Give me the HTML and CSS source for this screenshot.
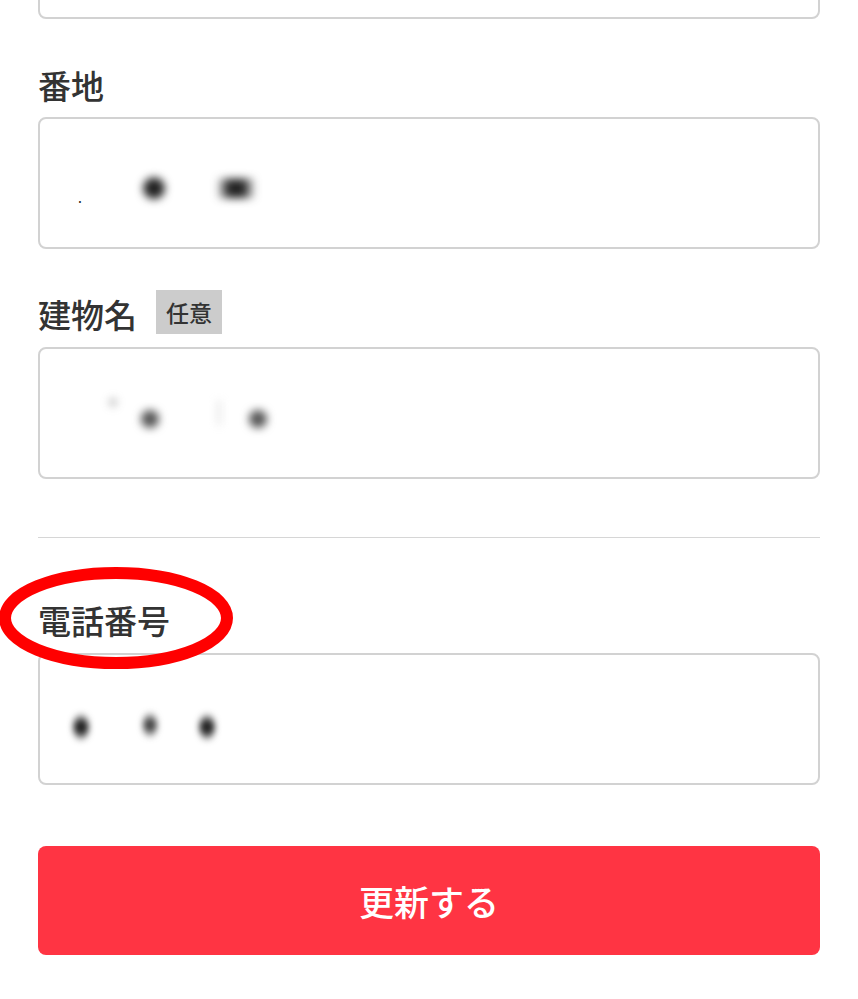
FILE: index.html
```html
<!DOCTYPE html>
<html lang="ja">
<head>
<meta charset="utf-8">
<link rel="stylesheet" href="styles.css">
</head>
<body>
<div class="page">
  <div class="field field-top"></div>

  <div class="label label-first">番地</div>
  <div class="field">
    <span class="blur dot1">.</span>
    <span class="blur b1">●</span>
    <span class="blur b2">■</span>
  </div>

  <div class="label">建物名<span class="badge">任意</span></div>
  <div class="field">
    <span class="blur c1">+</span>
    <span class="blur c2">●</span>
    <span class="blur c3">|</span>
    <span class="blur c4">●</span>
  </div>

  <hr class="divider">

  <div class="label label-tel">電話番号</div>
  <div class="field">
    <span class="blur t1">●</span>
    <span class="blur t2">●</span>
    <span class="blur t3">●</span>
  </div>

  <button class="submit">更新する</button>

  <svg class="mark" width="260" height="120" viewBox="0 0 260 120">
    <ellipse cx="116" cy="62" rx="111" ry="45" fill="none" stroke="#ff0000" stroke-width="12"/>
  </svg>
</div>
</body>
</html>
```

FILE: styles.css
```css
html, body {
  margin: 0;
  padding: 0;
  background: #ffffff;
}
body {
  font-family: "Noto Sans CJK JP", "Noto Sans", sans-serif;
  color: #333333;
  overflow: hidden;
}
.page {
  position: relative;
  display: flow-root;
  padding: 0 38px;
}
.field {
  box-sizing: border-box;
  height: 132px;
  border: 2px solid #d2d2d2;
  border-radius: 8px;
  display: flex;
  align-items: center;
  position: relative;
}
.field-top {
  margin-top: -113px;
}
.label {
  font-size: 33px;
  font-weight: 500;
  line-height: 48px;
  height: 48px;
  margin: 41px 0 9px;
  display: flex;
  align-items: center;
  letter-spacing: 0;
}
.label-first {
  margin-top: 42px;
  margin-bottom: 8px;
}
.badge {
  display: inline-block;
  background: #cccccc;
  color: #333333;
  font-size: 23px;
  font-weight: 500;
  line-height: 44px;
  height: 44px;
  padding: 0 10px;
  margin-left: 19px;
  margin-top: -4px;
}
.divider {
  border: none;
  border-top: 1px solid #d6d6d6;
  margin: 58px 0 0;
  height: 0;
}
.label-tel {
  margin-top: 58px;
}
.submit {
  display: block;
  width: 100%;
  height: 109px;
  margin-top: 61px;
  border: none;
  border-radius: 8px;
  background: #ff3443;
  color: #ffffff;
  font-family: "Noto Sans CJK JP", "Noto Sans", sans-serif;
  font-size: 35px;
  font-weight: 500;
  padding: 0;
}
.blur {
  position: absolute;
  color: #222;
  font-size: 24px;
  line-height: 24px;
  filter: blur(4px);
}
.dot1 { left: 38px; top: 66px; filter: none; font-size: 14px; }
.b1 { left: 102px; top: 56px; }
.b2 { left: 184px; top: 56px; transform: scaleX(1.4); }
.c1 { left: 68px; top: 40px; font-size: 18px; color: #666; }
.c2 { left: 100px; top: 58px; font-size: 20px; color: #555; }
.c3 { left: 176px; top: 48px; font-size: 22px; color: #bbb; }
.c4 { left: 208px; top: 58px; font-size: 20px; color: #555; }
.t1 { left: 30px; top: 58px; font-size: 22px; transform: scaleX(0.8); }
.t2 { left: 100px; top: 58px; font-size: 20px; color: #444; transform: scaleX(0.8); }
.t3 { left: 156px; top: 58px; font-size: 22px; transform: scaleX(0.8); }
.mark {
  position: absolute;
  left: 0;
  top: 556px;
}
```
